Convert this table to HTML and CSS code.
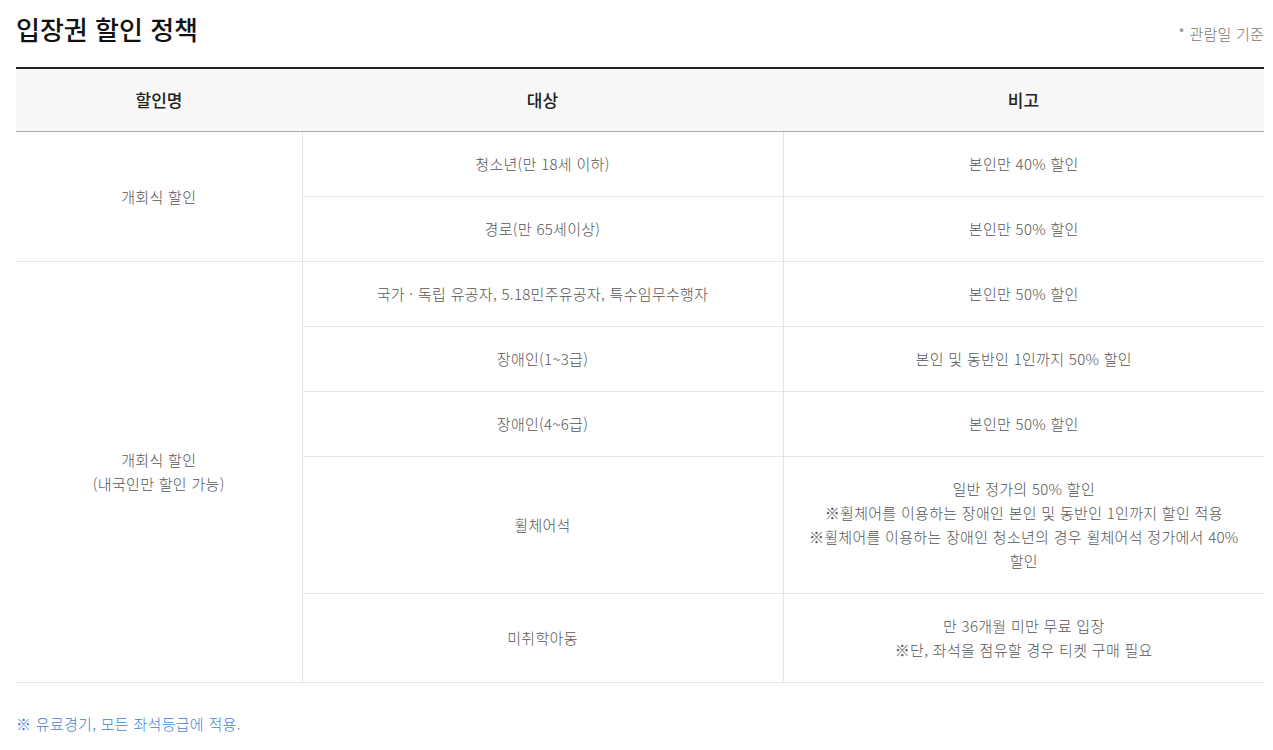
FILE: index.html
```html
<!DOCTYPE html>
<html lang="ko">
<head>
<meta charset="utf-8">
<title>입장권 할인 정책</title>
<link rel="stylesheet" href="styles.css">
</head>
<body>
<div class="wrap">
  <div class="head">
    <h2 class="title">입장권 할인 정책</h2>
    <span class="basis">* 관람일 기준</span>
  </div>
  <table class="policy">
    <colgroup>
      <col class="c1">
      <col class="c2">
      <col class="c3">
    </colgroup>
    <thead>
      <tr><th>할인명</th><th>대상</th><th>비고</th></tr>
    </thead>
    <tbody>
      <tr>
        <td rowspan="2" class="first">개회식 할인</td>
        <td>청소년(만 18세 이하)</td>
        <td class="last">본인만 40% 할인</td>
      </tr>
      <tr>
        <td>경로(만 65세이상)</td>
        <td class="last">본인만 50% 할인</td>
      </tr>
      <tr>
        <td rowspan="5" class="first">개회식 할인<br>(내국인만 할인 가능)</td>
        <td>국가 · 독립 유공자, 5.18민주유공자, 특수임무수행자</td>
        <td class="last">본인만 50% 할인</td>
      </tr>
      <tr>
        <td>장애인(1~3급)</td>
        <td class="last">본인 및 동반인 1인까지 50% 할인</td>
      </tr>
      <tr>
        <td>장애인(4~6급)</td>
        <td class="last">본인만 50% 할인</td>
      </tr>
      <tr>
        <td>휠체어석</td>
        <td class="last">일반 정가의 50% 할인<br>※휠체어를 이용하는 장애인 본인 및 동반인 1인까지 할인 적용<br>※휠체어를 이용하는 장애인 청소년의 경우 휠체어석 정가에서 40% 할인</td>
      </tr>
      <tr>
        <td>미취학아동</td>
        <td class="last">만 36개월 미만 무료 입장<br>※단, 좌석을 점유할 경우 티켓 구매 필요</td>
      </tr>
    </tbody>
  </table>
  <p class="note">※ 유료경기, 모든 좌석등급에 적용.</p>
</div>
</body>
</html>
```
FILE: styles.css
```css
html, body {
  margin: 0;
  padding: 0;
  background: #fff;
}
body {
  font-family: "Noto Sans CJK KR", "Noto Sans", sans-serif;
  color: #555;
}
.wrap {
  width: 1248px;
  margin-left: 16px;
}
.head {
  display: flex;
  justify-content: space-between;
  align-items: center;
  padding-top: 10px;
  margin-bottom: 19px;
}
.title {
  margin: 0;
  font-size: 26px;
  line-height: 38px;
  font-weight: 500;
  color: #111;
  letter-spacing: 0;
}
.basis {
  font-size: 15px;
  font-weight: 300;
  color: #777;
  padding-top: 8px;
  letter-spacing: 0.2px;
}
.policy {
  width: 100%;
  border-collapse: collapse;
  table-layout: fixed;
  border-top: 2px solid #222;
}
.c1 { width: 286px; }
.c2 { width: 481px; }
.c3 { width: 481px; }
.policy th {
  background: #f8f8f8;
  font-size: 17px;
  font-weight: 500;
  color: #222;
  line-height: 24px;
  padding: 19px 10px;
  border-bottom: 1px solid #aaa;
}
.policy td {
  text-align: center;
  font-size: 15px;
  font-weight: 300;
  color: #555;
  line-height: 24px;
  letter-spacing: 0.3px;
  padding: 20px 22px;
  border-bottom: 1px solid #e5e5e5;
  border-left: 1px solid #e5e5e5;
}
.policy td.first {
  border-left: none;
}
.note {
  margin: 29px 0 0;
  font-size: 15px;
  line-height: 24px;
  font-weight: 300;
  letter-spacing: 0.3px;
  color: #3f7fd5;
}
```
